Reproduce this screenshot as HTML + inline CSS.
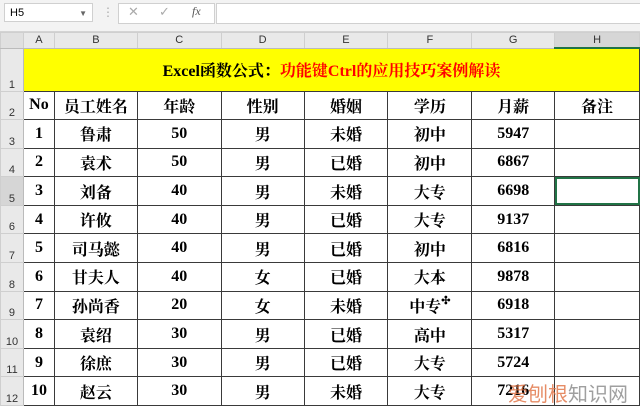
<!DOCTYPE html><html><head><meta charset="utf-8"><style>
body{margin:0;width:640px;height:403px;overflow:hidden;background:#fff;font-family:"Liberation Serif","Noto Serif CJK SC",serif;position:relative}
.tb{position:absolute;left:0;top:0;width:640px;height:31px;background:#f3f3f3;border-bottom:1px solid #d4d4d4}
.nb{position:absolute;left:4px;top:3px;height:19px;background:#fff;border:1px solid #d0d0d0;font:11px "Liberation Sans",sans-serif;line-height:19px;padding-left:5px;box-sizing:border-box;width:89px}
.fx{position:absolute;left:118px;top:3px;width:95px;height:19px;background:#fff;border:1px solid #d0d0d0;color:#aaa;font:13px "Liberation Sans",sans-serif}
.fb{position:absolute;left:216px;top:3px;width:424px;height:19px;background:#fff;border:1px solid #d0d0d0}
table{position:absolute;left:0;top:32px;border-collapse:collapse;table-layout:fixed}
td{border:1px solid #3a3a3a;padding:0;text-align:center;font-weight:bold;font-size:16px;overflow:hidden;white-space:nowrap}
td.rh{background:#e9e9e9;border:1px solid #cfcfcf;border-right:1px solid #bbb;font:11px "Liberation Sans",sans-serif;font-weight:normal;vertical-align:bottom;color:#333;text-align:center}
tr.ch td{background:#e9e9e9;border:1px solid #cfcfcf;border-bottom:1px solid #bbb;font:11px "Liberation Sans",sans-serif;color:#333;height:14px}
tr.d td{height:27.6px}
.sel{outline:2px solid #217346;outline-offset:-2px}
</style></head><body>
<div class="tb"><div class="nb">H5<span style="position:absolute;right:5px;font-size:8px;color:#666">▼</span></div>
<span style="position:absolute;left:102px;top:5px;color:#aaa;font:12px sans-serif">⋮</span>
<div class="fx"><span style="position:absolute;left:9px;top:0">✕</span><span style="position:absolute;left:40px;top:0">✓</span><span style="position:absolute;left:73px;top:0;color:#555;font:italic 12px 'Liberation Serif',serif">fx</span></div>
<div class="fb"></div></div>
<table>
<colgroup><col style="width:23px"><col style="width:31px"><col style="width:83px"><col style="width:84px"><col style="width:83px"><col style="width:84px"><col style="width:84px"><col style="width:83px"><col style="width:85px"></colgroup>
<tr class="ch"><td style="background:#e0e0e0"></td><td>A</td><td>B</td><td>C</td><td>D</td><td>E</td><td>F</td><td>G</td><td style="background:#d6d6d6;border-bottom:2px solid #217346">H</td></tr>
<tr><td class="rh" style="height:42px">1</td><td colspan="8" style="background:#ffff00;font-size:16px">Excel函数公式：<span style="color:#f00">功能键Ctrl的应用技巧案例解读</span></td></tr>
<tr class="d"><td class="rh">2</td><td>No</td><td>员工姓名</td><td>年龄</td><td>性别</td><td>婚姻</td><td>学历</td><td>月薪</td><td>备注</td></tr>
<tr class="d"><td class="rh">3</td><td>1</td><td>鲁肃</td><td>50</td><td>男</td><td>未婚</td><td>初中</td><td>5947</td><td></td></tr>
<tr class="d"><td class="rh">4</td><td>2</td><td>袁术</td><td>50</td><td>男</td><td>已婚</td><td>初中</td><td>6867</td><td></td></tr>
<tr class="d"><td class="rh" style="background:#d6d6d6">5</td><td>3</td><td>刘备</td><td>40</td><td>男</td><td>未婚</td><td>大专</td><td>6698</td><td class="sel"></td></tr>
<tr class="d"><td class="rh">6</td><td>4</td><td>许攸</td><td>40</td><td>男</td><td>已婚</td><td>大专</td><td>9137</td><td></td></tr>
<tr class="d"><td class="rh">7</td><td>5</td><td>司马懿</td><td>40</td><td>男</td><td>已婚</td><td>初中</td><td>6816</td><td></td></tr>
<tr class="d"><td class="rh">8</td><td>6</td><td>甘夫人</td><td>40</td><td>女</td><td>已婚</td><td>大本</td><td>9878</td><td></td></tr>
<tr class="d"><td class="rh">9</td><td>7</td><td>孙尚香</td><td>20</td><td>女</td><td>未婚</td><td>中专<span style="font-size:11px;vertical-align:top">✣</span></td><td>6918</td><td></td></tr>
<tr class="d"><td class="rh">10</td><td>8</td><td>袁绍</td><td>30</td><td>男</td><td>已婚</td><td>高中</td><td>5317</td><td></td></tr>
<tr class="d"><td class="rh">11</td><td>9</td><td>徐庶</td><td>30</td><td>男</td><td>已婚</td><td>大专</td><td>5724</td><td></td></tr>
<tr class="d"><td class="rh">12</td><td>10</td><td>赵云</td><td>30</td><td>男</td><td>未婚</td><td>大专</td><td>7216</td><td></td></tr>
</table>
<div style="position:absolute;left:508px;top:378px;font:20px 'Noto Sans CJK SC',sans-serif;color:#888;opacity:.8"><span style="color:#e07040">爱刨根</span>知识网</div>
</body></html>
